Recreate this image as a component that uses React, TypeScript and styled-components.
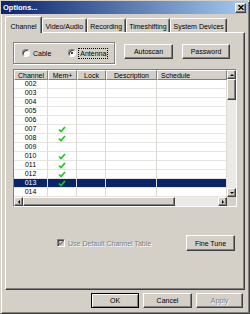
import React from "react";
import styled, { createGlobalStyle, css } from "styled-components";

const GlobalStyle = createGlobalStyle`
  html, body {
    margin: 0;
    padding: 0;
    background: #d4d0c8;
  }
  body {
    font-family: "Liberation Sans", Arial, sans-serif;
    font-size: 7px;
    color: #000;
  }
  * {
    box-sizing: border-box;
  }
`;

const raised = css`
  border: 1px solid;
  border-color: #ffffff #404040 #404040 #ffffff;
  box-shadow: inset -1px -1px 0 #808080;
  background: #d4d0c8;
`;

const channels = [
  "002", "003", "004", "005", "006", "007", "008",
  "009", "010", "011", "012", "013", "014",
];
const memorized = ["007", "008", "010", "011", "012", "013"];
const selected = "013";
const tabs = ["Channel", "Video/Audio", "Recording", "Timeshifting", "System Devices"];

function Check() {
  return (
    <svg width="8" height="7" viewBox="0 0 8 7">
      <path d="M1 3.5 L3 5.6 L7 1" fill="none" stroke="#1fc41f" strokeWidth="1.7" />
    </svg>
  );
}

function Arrow({ dir }: { dir: "up" | "down" | "left" | "right" }) {
  const pts = {
    up: "1,4 5,4 3,2",
    down: "1,2 5,2 3,4",
    left: "4,1 4,5 2,3",
    right: "2,1 2,5 4,3",
  }[dir];
  return (
    <svg width="6" height="6" viewBox="0 0 6 6">
      <polygon points={pts} fill="#000" />
    </svg>
  );
}

export default function App() {
  return (
    <>
      <GlobalStyle />
      <Window>
        <TitleBar>
          <Title>Options...</Title>
          <CloseBox>
            <svg width="6" height="5" viewBox="0 0 6 5">
              <path d="M0.5 0 L5.5 5 M5.5 0 L0.5 5" stroke="#000" strokeWidth="1.3" />
            </svg>
          </CloseBox>
        </TitleBar>
        <Body>
          <TabStrip>
            {tabs.map((t, i) => (
              <Tab key={t} $active={i === 0}>
                {t}
              </Tab>
            ))}
          </TabStrip>
          <Panel>
            <TopRow>
              <GroupBox>
                <Radio>
                  <RadioDot />
                  Cable
                </Radio>
                <Radio>
                  <RadioDot $on />
                  <Focus>Antenna</Focus>
                </Radio>
              </GroupBox>
              <Button $w={49} $ml={9}>Autoscan</Button>
              <Button $w={48} $ml={9}>Password</Button>
            </TopRow>

            <ListView>
              <Columns>
                <HeaderRow>
                  <HeadCell>Channel</HeadCell>
                  <HeadCell>Mem+</HeadCell>
                  <HeadCell>Lock</HeadCell>
                  <HeadCell>Description</HeadCell>
                  <HeadCell $left>Schedule</HeadCell>
                </HeaderRow>
                {channels.map((c) => (
                  <Row key={c} $sel={c === selected}>
                    <Cell>{c}</Cell>
                    <Cell>{memorized.includes(c) && <Check />}</Cell>
                    <Cell />
                    <Cell />
                    <Cell />
                  </Row>
                ))}
              </Columns>
              <VScroll>
                <ArrowBtn>
                  <Arrow dir="up" />
                </ArrowBtn>
                <Thumb $h={21} />
                <Track />
                <ArrowBtn>
                  <Arrow dir="down" />
                </ArrowBtn>
              </VScroll>
              <HScroll>
                <ArrowBtn>
                  <Arrow dir="left" />
                </ArrowBtn>
                <Thumb $w={152} />
                <Track />
                <ArrowBtn>
                  <Arrow dir="right" />
                </ArrowBtn>
              </HScroll>
              <Corner />
            </ListView>

            <OptionRow>
              <CheckLabel>
                <CheckBox>
                  <svg width="6" height="6" viewBox="0 0 6 6">
                    <path d="M0.5 2.5 L2.3 4.5 L5.5 0.8" fill="none" stroke="#808080" strokeWidth="1.3" />
                  </svg>
                </CheckBox>
                Use Default Channel Table
              </CheckLabel>
              <Button $w={49} $h={16}>Fine Tune</Button>
            </OptionRow>
          </Panel>
          <Footer>
            <Button $w={48} $default>OK</Button>
            <Button $w={49}>Cancel</Button>
            <Button $w={47} $disabled>Apply</Button>
          </Footer>
        </Body>
      </Window>
    </>
  );
}

const Window = styled.div`
  width: 250px;
  height: 314px;
  border: 1px solid;
  border-color: #d4d0c8 #404040 #404040 #d4d0c8;
  box-shadow: inset 1px 1px 0 #ffffff, inset -1px -1px 0 #808080;
  padding: 0 1px 1px 0;
  display: flex;
  flex-direction: column;
`;

const TitleBar = styled.div`
  height: 13px;
  background: linear-gradient(to right, #0a246a, #a6caf0);
  display: flex;
  align-items: center;
  justify-content: space-between;
  padding: 0 2px 0 2px;
`;

const Title = styled.div`
  color: #fff;
  font-weight: bold;
  font-size: 7.5px;
`;

const CloseBox = styled.div`
  ${raised};
  width: 11px;
  height: 10px;
  display: flex;
  align-items: center;
  justify-content: center;
`;

const Body = styled.div`
  flex: 1;
  padding: 2px 3px 0 4px;
  display: flex;
  flex-direction: column;
`;

const TabStrip = styled.div`
  display: flex;
  align-items: flex-end;
  height: 16px;
  position: relative;
  z-index: 1;
`;

const Tab = styled.div<{ $active?: boolean }>`
  height: ${(p) => (p.$active ? 17 : 14)}px;
  padding: ${(p) => (p.$active ? "2px 4.5px 0" : "1px 2.5px 0")};
  margin: ${(p) => (p.$active ? "0 0 -1px 0" : "0")};
  border: 1px solid;
  border-bottom: none;
  border-color: #ffffff #404040 transparent #ffffff;
  box-shadow: inset -1px 0 0 #808080;
  border-radius: 2px 2px 0 0;
  background: #d4d0c8;
  display: flex;
  align-items: center;
  white-space: nowrap;
`;

const Panel = styled.div`
  height: 258px;
  border: 1px solid;
  border-color: #ffffff #404040 #404040 #ffffff;
  box-shadow: inset -1px -1px 0 #808080;
  padding: 9px 7px 0 7px;
  display: flex;
  flex-direction: column;
`;

const TopRow = styled.div`
  display: flex;
  align-items: flex-start;
`;

const GroupBox = styled.div`
  width: 102px;
  height: 22px;
  border: 1px solid #808080;
  box-shadow: inset 1px 1px 0 #ffffff, 1px 1px 0 #ffffff;
  display: flex;
  align-items: center;
  padding-left: 8px;
  gap: 17px;
`;

const Radio = styled.div`
  display: flex;
  align-items: center;
  gap: 3px;
`;

const RadioDot = styled.span<{ $on?: boolean }>`
  width: 8px;
  height: 8px;
  border-radius: 50%;
  background: #fff;
  border: 1px solid;
  border-color: #808080 #ffffff #ffffff #808080;
  box-shadow: inset 1px 1px 0 #404040;
  display: flex;
  align-items: center;
  justify-content: center;
  &::after {
    content: "";
    width: 2px;
    height: 2px;
    border-radius: 50%;
    background: ${(p) => (p.$on ? "#000" : "transparent")};
  }
`;

const Focus = styled.span`
  outline: 1px dotted #000;
  padding: 1px 1px;
`;

const Button = styled.div<{ $w: number; $h?: number; $ml?: number; $default?: boolean; $disabled?: boolean }>`
  ${raised};
  width: ${(p) => p.$w}px;
  height: ${(p) => p.$h ?? 15}px;
  margin-top: ${(p) => (p.$ml ? 2 : 0)}px;
  margin-left: ${(p) => p.$ml ?? 0}px;
  display: flex;
  align-items: center;
  justify-content: center;
  color: ${(p) => (p.$disabled ? "#808080" : "#000")};
  text-shadow: ${(p) => (p.$disabled ? "1px 1px 0 #ffffff" : "none")};
  ${(p) =>
    p.$default &&
    css`
      border-color: #000;
      box-shadow: inset 1px 1px 0 #ffffff, inset -1px -1px 0 #808080;
    `}
`;

const ListView = styled.div`
  margin-top: 5px;
  width: 224px;
  height: 138px;
  border: 1px solid;
  border-color: #808080 #ffffff #ffffff #808080;
  box-shadow: inset 1px 1px 0 #404040;
  background: #fff;
  display: grid;
  grid-template-columns: 213px 9px;
  grid-template-rows: 127px 9px;
`;

const Columns = styled.div`
  display: flex;
  flex-direction: column;
  overflow: hidden;
`;

const grid = css`
  display: grid;
  grid-template-columns: 34px 29px 29px 51px 70px;
`;

const HeaderRow = styled.div`
  ${grid};
  height: 10px;
`;

const HeadCell = styled.div<{ $left?: boolean }>`
  ${raised};
  box-shadow: none;
  border-color: #ffffff #808080 #808080 #ffffff;
  display: flex;
  align-items: center;
  justify-content: ${(p) => (p.$left ? "flex-start" : "center")};
  padding-left: ${(p) => (p.$left ? 3 : 0)}px;
  white-space: nowrap;
  overflow: hidden;
`;

const Row = styled.div<{ $sel?: boolean }>`
  ${grid};
  height: 9px;
  background: ${(p) => (p.$sel ? "#0a246a" : "#ffffff")};
  color: ${(p) => (p.$sel ? "#ffffff" : "#000")};
`;

const Cell = styled.div`
  border-right: 1px solid #dcdad5;
  border-bottom: 1px solid #e6e4e0;
  display: flex;
  align-items: center;
  justify-content: center;
  line-height: 8px;
`;

const VScroll = styled.div`
  display: flex;
  flex-direction: column;
  background: #eceae6;
`;

const HScroll = styled.div`
  display: flex;
  background: #eceae6;
`;

const ArrowBtn = styled.div`
  ${raised};
  width: 9px;
  height: 9px;
  flex: none;
  display: flex;
  align-items: center;
  justify-content: center;
`;

const Thumb = styled.div<{ $w?: number; $h?: number }>`
  ${raised};
  flex: none;
  width: ${(p) => (p.$w ? `${p.$w}px` : "auto")};
  height: ${(p) => (p.$h ? `${p.$h}px` : "auto")};
`;

const Track = styled.div`
  flex: 1;
`;

const Corner = styled.div`
  background: #d4d0c8;
`;

const OptionRow = styled.div`
  margin-top: 28px;
  display: flex;
  align-items: center;
  padding-left: 44px;
  padding-right: 2px;
`;

const CheckLabel = styled.div`
  display: flex;
  align-items: center;
  gap: 3px;
  color: #808080;
  text-shadow: 1px 1px 0 #ffffff;
  flex: 1;
`;

const CheckBox = styled.span`
  width: 8px;
  height: 8px;
  background: #d4d0c8;
  border: 1px solid;
  border-color: #808080 #ffffff #ffffff #808080;
  box-shadow: inset 1px 1px 0 #404040;
  display: flex;
  align-items: center;
  justify-content: center;
`;

const Footer = styled.div`
  margin-top: 3px;
  display: flex;
  justify-content: flex-end;
  gap: 4px;
  padding-right: 2px;
`;
